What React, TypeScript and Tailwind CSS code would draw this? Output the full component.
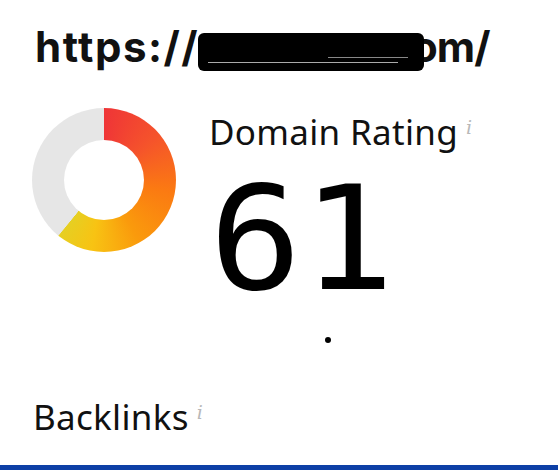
import React from "react";

function Info() {
  return (
    <span
      className="ml-[8px] mt-[6px] self-start text-[19px] italic text-[#b8b8b8] leading-none"
      style={{ fontFamily: '"DejaVu Serif", serif' }}
    >
      i
    </span>
  );
}

export default function App() {
  return (
    <div className="w-[558px] h-[470px] bg-white flex flex-col overflow-hidden" style={{ fontFamily: '"Noto Sans", sans-serif' }}>
      <div
        className="pl-[35px] pt-[25px] h-[88px] flex items-start text-[42px] font-bold leading-[44px] text-[#111]"
        style={{ fontFamily: 'Inter, sans-serif' }}
      >
        <span className="tracking-[1.5px]">https://</span>
        <span className="relative z-10 mt-[8px] ml-[-1px] w-[226px] h-[38px] bg-black rounded-[6px] flex flex-col justify-end pb-[8px] px-[10px] gap-[4px] shrink-0 overflow-hidden">
          <span className="block h-[1px] bg-[#888] w-[80px] ml-[120px]" />
          <span className="block h-[1px] bg-[#aaa] w-[190px]" />
        </span>
        <span className="ml-[-12px] tracking-[-1px]">om/</span>
      </div>
      <div className="flex pl-[32px]">
        <div className="mt-[20px] w-[144px] h-[144px] shrink-0 rounded-full flex items-center justify-center bg-[conic-gradient(#ef3537_0deg,#f5532b_50deg,#fb7a12_100deg,#fa9a0c_150deg,#f8c313_190deg,#e6cf22_219deg,#e6e6e6_219.6deg,#e6e6e6_360deg)]">
          <div className="w-[80px] h-[80px] rounded-full bg-white" />
        </div>
        <div className="ml-[33px] flex flex-col">
          <div className="mt-[24px] flex items-start text-[35px] leading-[40px] tracking-[0.3px] text-[#111]">
            <span>Domain Rating</span>
            <Info />
          </div>
          <div
            className="mt-[15px] text-[144px] leading-[144px] text-black origin-left scale-x-[1.07]"
            style={{ fontFamily: '"DejaVu Sans Mono", monospace' }}
          >
            61
          </div>
          <div className="mt-[26px] ml-[116px] w-[6px] h-[6px] rounded-full bg-black" />
        </div>
      </div>
      <div className="mt-[54px] pl-[33px] flex items-start text-[35px] leading-[40px] tracking-[0.3px] text-[#111]">
        <span>Backlinks</span>
        <Info />
      </div>
      <div className="mt-auto h-[5px] bg-[#0d3fa6]" />
    </div>
  );
}
